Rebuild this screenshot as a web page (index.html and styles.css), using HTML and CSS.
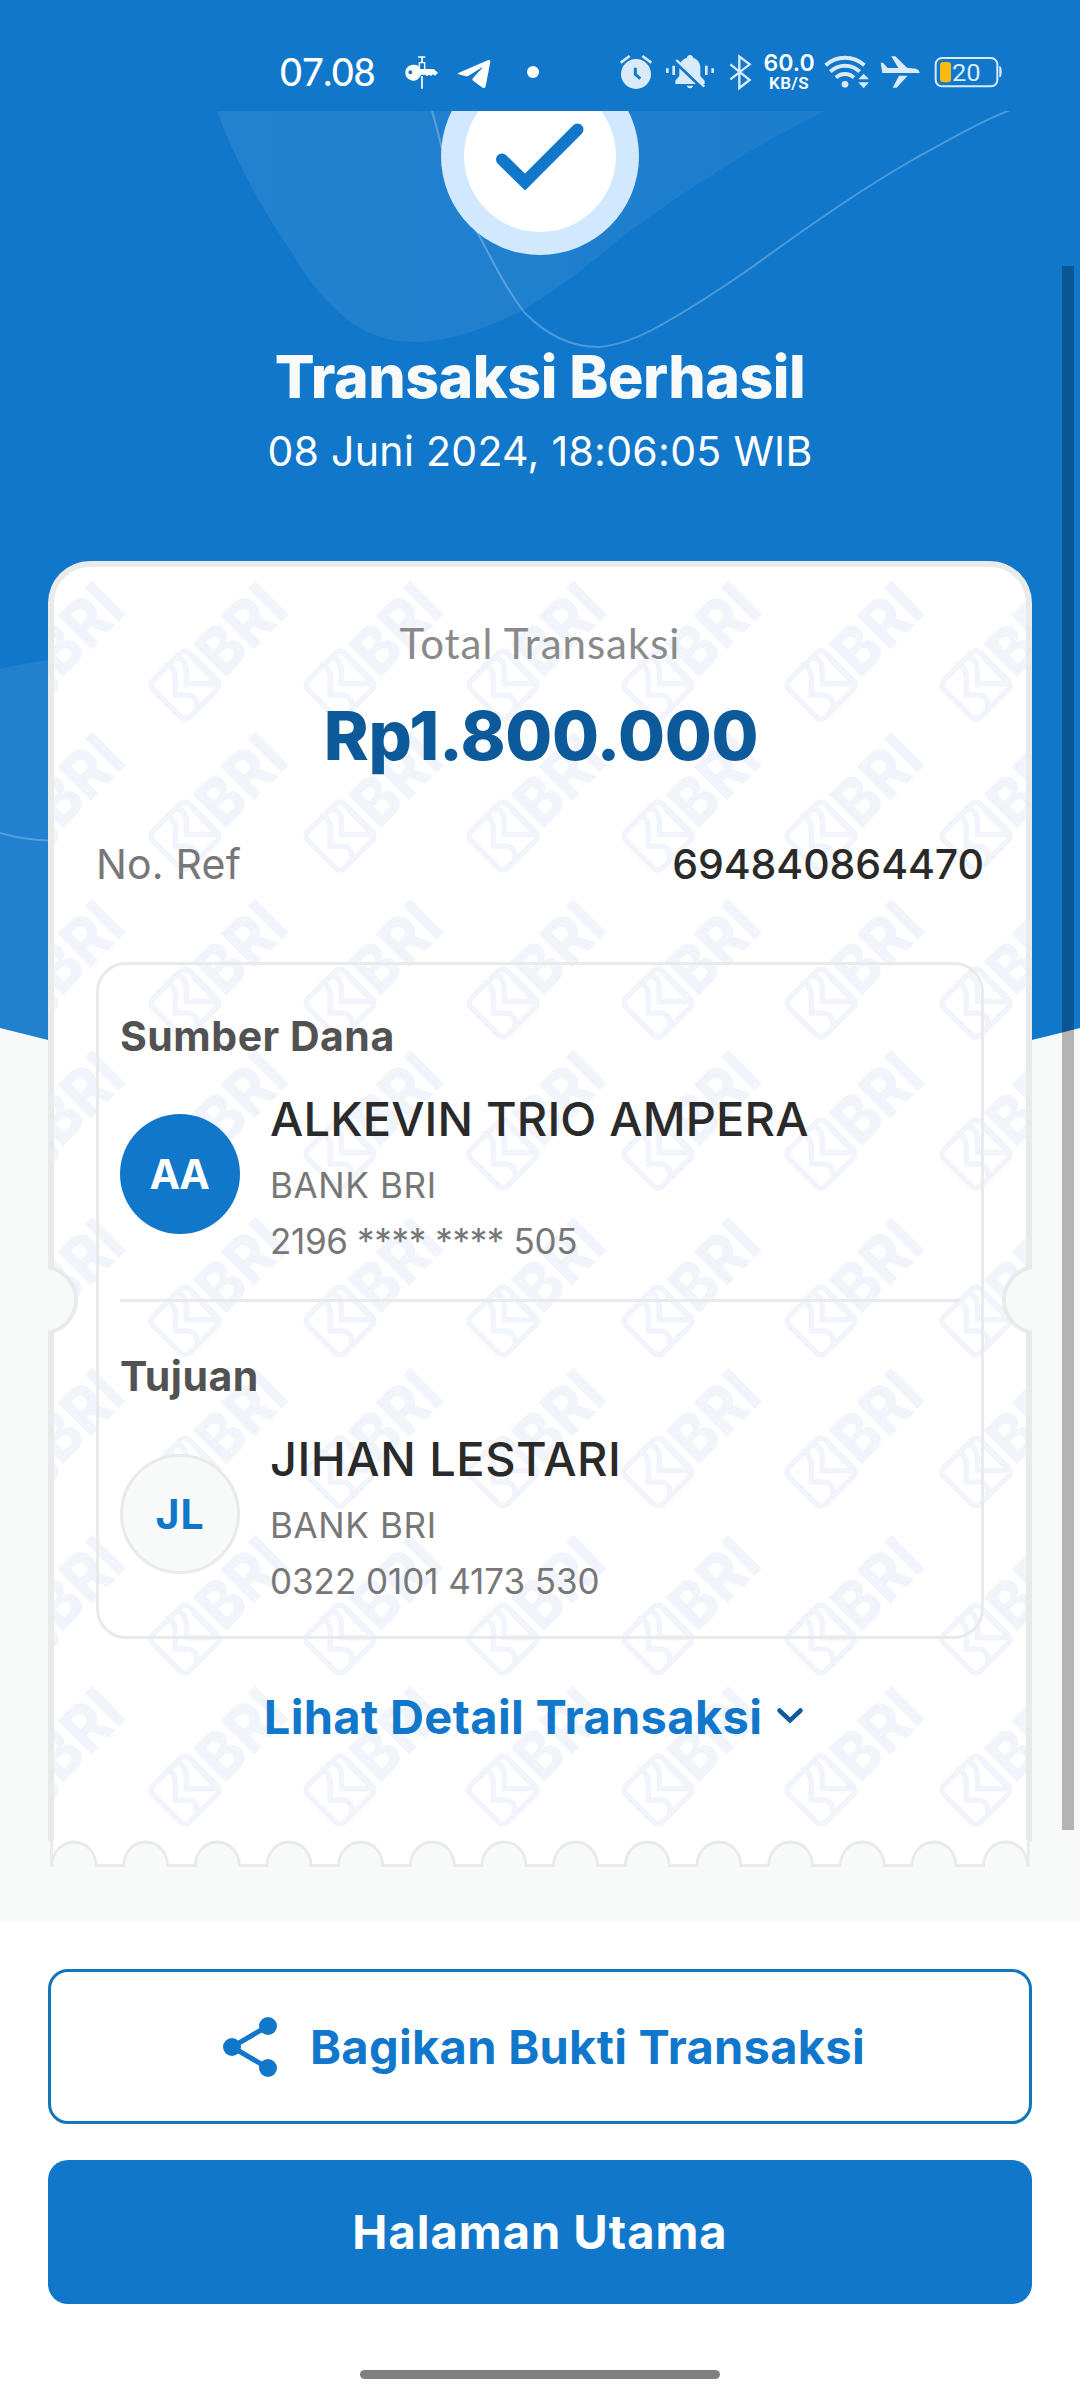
FILE: index.html
```html
<!DOCTYPE html>
<html lang="id">
<head>
<meta charset="utf-8">
<title>Transaksi Berhasil</title>
<link rel="stylesheet" href="styles.css">
</head>
<body>
<div class="screen">
  <header class="status">
    <span class="time">07.08</span>
    <svg class="ic key" width="36" height="44" viewBox="432 66 108 132" fill="#fff">
      <path fill-rule="evenodd" d="M462 104a24 24 0 0 1 21 13h38l13 11-9 9-6-4-6 5-6-4-6 4-6-4h-12a24 24 0 1 1-21-30zM451 121a6 6 0 1 0 0 12 6 6 0 0 0 0-12z"/>
      <path d="M474 81h22M486 81v18M486 138v38" fill="none" stroke="#fff" stroke-width="5"/>
      <path d="M478 98h16v21h-16z" fill="#1077cb" stroke="#fff" stroke-width="4"/>
    </svg>
    <svg class="ic plane-tg" width="34" height="44" viewBox="591 66 102 132" fill="#fff">
      <path d="M595 129l90-39q7-1 6 5l-14 74q-2 8-9 4l-29-21q-4-4 0-8l27-29q2-4-2-2l-38 24q-4 3-8 2l-22-6q-5-2-1-4z"/>
    </svg>
    <svg class="ic dot" width="12" height="44" viewBox="801 66 36 132"><circle cx="819" cy="126" r="18" fill="#fff"/></svg>
    <div class="status-right">
      <svg class="ic" width="32" height="44" viewBox="60 66 96 132">
        <circle cx="108" cy="132" r="45" fill="#d9ebfb"/>
        <path d="M62 98l27-20M127 78l27 20" stroke="#d9ebfb" stroke-width="8"/>
        <path d="M106 113v20l15 13" fill="none" stroke="#1077cb" stroke-width="9"/>
      </svg>
      <svg class="ic bell" width="50" height="44" viewBox="195 66 150 132">
        <path d="M226 162v-10l12-14v-24c0-14 8-26 22-30q2-9 10-9t10 9c14 4 21 16 21 30v24l13 14v10zM260 167h20q-3 8-10 8t-10-8z" fill="#d9ebfb"/>
        <path d="M223 94l88 84" stroke="#1077cb" stroke-width="9"/>
        <path d="M229 90l84 80" stroke="#d9ebfb" stroke-width="7"/>
        <path d="M202 115v14M221 107v28M319 107v28M338 115v14" stroke="#d9ebfb" stroke-width="8"/>
      </svg>
      <svg class="ic bt" width="23" height="44" viewBox="387 66 69 132">
        <path d="M391 103l58 47-31 24V80l31 23-58 45" fill="none" stroke="#d9ebfb" stroke-width="7"/>
      </svg>
      <div class="net"><span class="rate">60.0</span><span class="unit">KB/S</span></div>
      <svg class="ic wifi" width="46" height="44" viewBox="671 66 138 132">
        <g fill="none" stroke="#d9ebfb" stroke-width="12">
          <path d="M676 106a86 86 0 0 1 116 0"/><path d="M690 125a63 63 0 0 1 88 0"/><path d="M707 143a38 38 0 0 1 54 0"/>
        </g>
        <g fill="#d9ebfb"><circle cx="734" cy="163" r="10"/><path d="M790 131l16 17h-32zM790 175l16-18h-32z"/></g>
      </svg>
      <svg class="ic plane" width="40" height="44" viewBox="840 66 120 132">
        <path d="M842 98h7l14 16h32l-21-35h12l35 34 27 3q9 3 12 13H847zM897 137h26l-33 36h-12z" fill="#d9ebfb"/>
      </svg>
      <svg class="ic batt" width="69" height="44" viewBox="1002 66 207 132">
        <rect x="1007" y="84" width="185" height="85" rx="19" fill="none" stroke="#d9ebfb" stroke-width="6"/>
        <rect x="1020" y="96" width="33" height="61" rx="9" fill="#fdb913"/>
        <path d="M1200 108q5 3 5 17t-5 17h-2v-34z" fill="#d9ebfb"/>
        <text x="1056" y="153" class="batt-text" textLength="86" lengthAdjust="spacingAndGlyphs">20</text>
      </svg>
    </div>
  </header>

  <main class="scroll">
    <svg class="hero-bg" width="1080" height="960" viewBox="0 111 1080 960">
      <defs>
        <linearGradient id="petal" x1="0" y1="0" x2="1" y2="0">
          <stop offset="0" stop-color="#fff" stop-opacity=".08"/><stop offset="1" stop-color="#fff" stop-opacity=".05"/>
        </linearGradient>
        <clipPath id="heroClip"><path d="M0 111H1080V1028Q540 1169 0 1028Z"/></clipPath>
      </defs>
      <g clip-path="url(#heroClip)">
        <path d="M0 111H1080V1171H0Z" fill="#1077cb"/>
        <path d="M217 111C235 160 262 210 293 254C325 308 362 342 413 342C455 342 495 324 525 309C560 288 592 262 622 237C660 208 695 186 723 168C760 144 795 126 825 111Z" fill="url(#petal)"/>
        <path d="M432 111Q438 132 441 145C452 185 468 216 482 241C496 268 508 291 524 312C545 334 570 347 599 347C622 345 642 336 661 325C695 306 722 288 748 270C795 236 856 192 916 158C950 139 980 122 1010 110" fill="none" stroke="#fff" stroke-opacity=".26" stroke-width="2"/>
        <path d="M0 669Q24 663 48 660L300 640V1171H0Z" fill="#fff" fill-opacity=".075"/>
        <path d="M0 833Q24 840 48 840.5L90 841" fill="none" stroke="#fff" stroke-opacity=".24" stroke-width="2"/>
      </g>
    </svg>

    <section class="hero">
      <svg class="check" width="198" height="144" viewBox="441 111 198 144">
        <circle cx="540" cy="156" r="99" fill="#d1e8fe"/>
        <circle cx="540" cy="156" r="76" fill="#fff"/>
        <path d="M502 159.500L525 182L577.500 129.500" fill="none" stroke="#1077cb" stroke-width="12" stroke-linecap="round"/>
      </svg>
      <h1>Transaksi Berhasil</h1>
      <p class="date">08 Juni 2024, 18:06:05 WIB</p>
    </section>

    <section class="card">
      <svg class="watermark" width="972" height="1274">
        <defs>
          <g id="logo" transform="scale(.33333)" fill="none" stroke="#f1f5fb">
            <rect x="57.500" y="252.500" width="155" height="155" rx="19" stroke-width="17" transform="rotate(-45 135 330)"/>
            <path d="M74 270C94 268 106 286 106 310V360H142C164 361 174 378 171 402" stroke-width="17"/>
            <path d="M108 248C130 248 139 266 139 290V326H238" stroke-width="17"/>
            <path d="M126 230C146 230 156 240 161 256L224 320" stroke-width="11"/>
            <text class="wm-text" transform="translate(260 305) rotate(-45)" x="-12" y="0" textLength="286" lengthAdjust="spacingAndGlyphs">BRI</text>
          </g>
          <pattern id="wm" patternUnits="userSpaceOnUse" x="86" y="8" width="318" height="318">
            <use href="#logo"/><use href="#logo" x="155"/><use href="#logo" y="151"/><use href="#logo" x="155" y="151"/>
          </pattern>
        </defs>
        <rect width="972" height="1274" fill="url(#wm)"/>
      </svg>
      <svg class="notch left" width="32" height="72" viewBox="48 1264 32 72"><circle cx="43" cy="1300" r="33" fill="#f8faf9" stroke="#e9ebea" stroke-width="4"/></svg>
      <svg class="notch right" width="32" height="72" viewBox="48 1264 32 72"><circle cx="43" cy="1300" r="33" fill="#f8faf9" stroke="#e9ebea" stroke-width="4"/></svg>

      <div class="content">
        <p class="label">Total Transaksi</p>
        <p class="amount">Rp1.800.000</p>
        <div class="ref"><span class="ref-label">No. Ref</span><span class="ref-no">694840864470</span></div>
        <div class="accounts">
          <h2>Sumber Dana</h2>
          <div class="party">
            <div class="avatar solid">AA</div>
            <div><p class="name">ALKEVIN TRIO AMPERA</p><p class="bank">BANK BRI</p><p class="acct masked">2196 **** **** 505</p></div>
          </div>
          <hr>
          <h2 class="dest">Tujuan</h2>
          <div class="party">
            <div class="avatar outline">JL</div>
            <div><p class="name wide">JIHAN LESTARI</p><p class="bank">BANK BRI</p><p class="acct">0322 0101 4173 530</p></div>
          </div>
        </div>
        <div class="detail"><span>Lihat Detail Transaksi</span>
          <svg width="28" height="18" viewBox="0 0 28 18"><path d="M3.500 4.500L14 14.500L24.500 4.500" fill="none" stroke="#0d5a9a" stroke-width="4.500" stroke-linecap="round"/></svg>
        </div>
      </div>
    </section>
    <svg class="torn" width="984" height="28" viewBox="48 1840 984 28">
      <path d="M51.500 1838V1865.500H52a22 23.500 0 0 1 44 0h27.660a22 23.500 0 0 1 44 0h27.660a22 23.500 0 0 1 44 0h27.660a22 23.500 0 0 1 44 0h27.660a22 23.500 0 0 1 44 0h27.660a22 23.500 0 0 1 44 0h27.660a22 23.500 0 0 1 44 0h27.660a22 23.500 0 0 1 44 0h27.660a22 23.500 0 0 1 44 0h27.660a22 23.500 0 0 1 44 0h27.660a22 23.500 0 0 1 44 0h27.660a22 23.500 0 0 1 44 0h27.660a22 23.500 0 0 1 44 0h27.660a22 23.500 0 0 1 44 0h.700V1838" fill="#fff" stroke="#e9ebea" stroke-width="2.800"/>
    </svg>
    <div class="scrollbar"></div>
  </main>

  <footer class="actions">
    <button class="btn share">
      <svg width="56" height="62" viewBox="221 2015 56 62"><g fill="#1077cb"><circle cx="267" cy="2025" r="9"/><circle cx="231" cy="2046" r="9"/><circle cx="267" cy="2067" r="9"/></g><path d="M267 2025L231 2046L267 2067" fill="none" stroke="#1077cb" stroke-width="5"/></svg>
      <span>Bagikan Bukti Transaksi</span>
    </button>
    <button class="btn home">Halaman Utama</button>
    <div class="home-bar"></div>
  </footer>
</div>
</body>
</html>
```
FILE: styles.css
```css
* { box-sizing: border-box; margin: 0; padding: 0; }
body { background: #fff; font-family: Inter, "Liberation Sans", sans-serif; }
svg { display: block; flex: none; }
.screen { width: 1080px; height: 2400px; display: flex; flex-direction: column; overflow: hidden; }

/* Status bar */
.status { height: 111px; flex: none; display: flex; align-items: flex-start; padding: 52px 77px 0 280px; background: #1077cb; color: #fff; }
.time { width: 99px; font: 500 38px/39px Lato, sans-serif; letter-spacing: -.4px; }
.key { margin-left: 25px; }
.plane-tg { margin-left: 17px; }
.dot { margin-left: 36px; }
.status-right { display: flex; align-items: flex-start; margin-left: auto; }
.bell { margin-left: 13px; }
.bt { margin-left: 14px; }
.net { width: 52px; margin-left: 11px; display: flex; flex-direction: column; align-items: center; white-space: nowrap; }
.rate { font-size: 23px; line-height: 22px; font-weight: 600; }
.unit { font: 600 17px/18px Roboto, sans-serif; letter-spacing: .4px; }
.wifi { margin-left: 9px; }
.plane { margin-left: 10px; }
.batt { margin-left: 14px; }
.batt-text { font: 400 71px Roboto, sans-serif; fill: #d9ebfb; }

/* Scrollable area */
.scroll { position: relative; height: 1810px; flex: none; background: #f8faf9; overflow: hidden; }
.hero-bg { position: absolute; left: 0; top: 0; }
.hero { position: relative; display: flex; flex-direction: column; align-items: center; }
h1 { margin-top: 89px; font-size: 59px; line-height: 65px; font-weight: 800; letter-spacing: -.48px; color: #f8faf9; }
.date { margin-top: 18px; font-size: 41px; line-height: 48px; letter-spacing: .3px; color: #fff; }

/* Receipt */
.card { position: relative; height: 1280px; margin: 86px 48px 0; border: solid #e9ebea; border-width: 6px 6px 0; border-radius: 42px 42px 0 0; background: #fff; }
.watermark { position: absolute; left: 0; top: 0; }
.wm-text { font: 800 196px Inter, sans-serif; fill: #f1f5fb; stroke: none; }
.notch { position: absolute; top: 697px; }
.notch.left { left: -6px; }
.notch.right { right: -6px; transform: scaleX(-1); }
.content { position: relative; padding: 52px 42px 0; }
.label { text-align: center; font: 400 42px/48px Lato, sans-serif; letter-spacing: .95px; color: #8a8a8a; }
.amount { margin-top: 28px; padding-left: 2px; text-align: center; font-size: 68px; line-height: 80px; font-weight: 800; letter-spacing: -.35px; color: #0d5a9a; }
.ref { margin-top: 65px; display: flex; justify-content: space-between; font-size: 41px; line-height: 48px; }
.ref-label { color: #777; letter-spacing: .2px; }
.ref-no { color: #2a2a2a; font-weight: 500; letter-spacing: -.05px; }
.accounts { height: 677px; margin-top: 74px; padding: 47px 21px 0; border: 3px solid #e9ebea; border-radius: 30px; }
h2 { font-size: 41px; line-height: 48px; font-weight: 700; letter-spacing: .5px; color: #525252; }
.dest { margin-top: 50.5px; }
.party { margin-top: 32px; height: 170px; display: flex; gap: 30px; }
.avatar { width: 120px; height: 120px; margin-top: 22px; border-radius: 50%; display: flex; align-items: center; justify-content: center; font-size: 41px; font-weight: 700; }
.solid { background: #1077cb; color: #fff; letter-spacing: -1.5px; padding-right: 2px; }
.outline { background: #f8faf9; border: 3px solid #e9ebea; color: #1077cb; letter-spacing: 1px; }
.name { font-size: 47px; line-height: 54px; font-weight: 500; letter-spacing: .15px; color: #2a2a2a; white-space: nowrap; }
.wide { letter-spacing: .5px; }
.bank { margin-top: 18px; font-size: 35px; line-height: 42px; letter-spacing: .65px; color: #777; }
.acct { margin-top: 14px; font-size: 35px; line-height: 42px; letter-spacing: -.05px; color: #777; }
.masked { letter-spacing: -.35px; }
hr { height: 3px; margin-top: 36.5px; border: 0; background: #e9ebea; }
.detail { margin: 50px 12px 0 0; display: flex; align-items: center; justify-content: center; gap: 14px; font-size: 47px; line-height: 56px; font-weight: 700; letter-spacing: .33px; color: #1077cb; }
.detail svg { margin-top: -4px; }
.torn { position: relative; margin: -1px 48px 0; }
.scrollbar { position: absolute; left: 1062px; top: 155px; width: 12px; height: 1564px; background: rgba(0, 0, 0, .28); }

/* Footer buttons */
.actions { flex: 1; display: flex; flex-direction: column; align-items: center; padding-top: 48px; background: #fff; }
.btn { width: 984px; display: flex; align-items: center; justify-content: center; border-radius: 20px; font: 700 47px/56px Inter, sans-serif; }
.share { height: 155px; gap: 32px; padding-left: 7px; border: 3px solid #1077bd; background: #fff; color: #1077cb; letter-spacing: .3px; }
.home { height: 144px; margin-top: 36px; border: 0; background: #1077cb; color: #fff; letter-spacing: 1px; }
.home-bar { width: 360px; height: 9px; margin-top: 66px; border-radius: 5px; background: #808080; }
```
